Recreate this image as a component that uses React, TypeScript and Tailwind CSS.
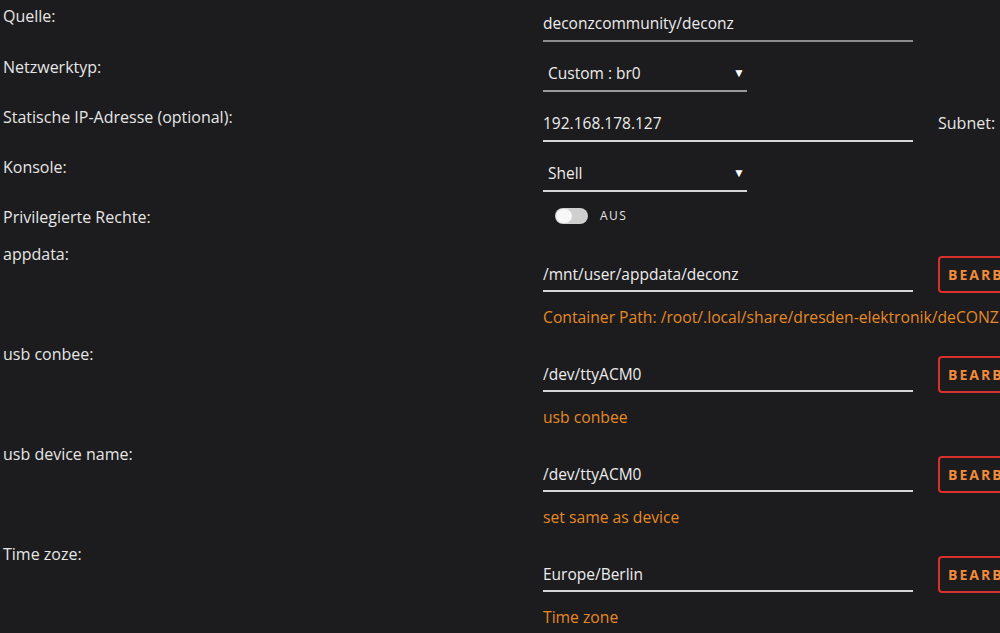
import React from 'react';

const font = { fontFamily: '"Open Sans", "Noto Sans", sans-serif' };

interface PathRowProps {
    label: string;
    value: string;
    hint: string;
}

const Label: React.FC<{ text: string }> = ({ text }) => (
    <div className="w-[540px] shrink-0 pl-[3px] pt-[6px] text-[16px] leading-[22px] text-[#e6e6e6]">{text}</div>
);

const TextInput: React.FC<{ value: string; dim?: boolean }> = ({ value, dim }) => (
    <div
        className={`w-[370px] pb-[5px] text-[15.5px] leading-[24px] text-[#ededed] border-b-2 ${dim ? 'border-[#8d8d8d]' : 'border-[#d6d6d6]'}`}
    >
        {value}
    </div>
);

const SelectBox: React.FC<{ value: string; dim?: boolean }> = ({ value, dim }) => (
    <div
        className={`w-[204px] flex items-center justify-between pl-[5px] pr-[2px] pb-[5px] text-[15.5px] leading-[24px] text-[#ededed] border-b-2 ${dim ? 'border-[#9a9a9a]' : 'border-[#d6d6d6]'}`}
    >
        <span>{value}</span>
        <span className="text-[12px] text-white">▼</span>
    </div>
);

const PathRow: React.FC<PathRowProps> = ({ label, value, hint }) => (
    <div className="flex h-[100px]">
        <Label text={label} />
        <div className="pt-[19px] pl-[3px]">
            <div className="flex items-end gap-[25px]">
                <div className="pb-[1px]">
                    <div className="w-[370px] pb-[4px] text-[15.5px] leading-[24px] text-[#ededed] border-b-2 border-[#d6d6d6]">
                        {value}
                    </div>
                </div>
                <button className="h-[37px] w-[130px] shrink-0 rounded-[4px] border-2 border-[#d9302c] pl-[8px] text-left text-[14px] font-bold tracking-[2px] text-[#f28b3a]">
                    BEARBEITEN
                </button>
            </div>
            <div className="mt-[13px] whitespace-nowrap text-[15.7px] leading-[22px] text-[#e58a25]">{hint}</div>
        </div>
    </div>
);

export default function App() {
    return (
        <div className="h-[633px] w-[1000px] overflow-hidden bg-[#1c1b1d]" style={font}>
            <div className="flex h-[50px]">
                <div className="w-[540px] shrink-0 pl-[3px] pt-[5px] text-[16px] leading-[22px] text-[#e6e6e6]">Quelle:</div>
                <div className="pt-[11px] pl-[3px]">
                    <TextInput value="deconzcommunity/deconz" dim />
                </div>
            </div>
            <div className="flex h-[50px]">
                <Label text="Netzwerktyp:" />
                <div className="pt-[11px] pl-[3px]">
                    <SelectBox value="Custom : br0" dim />
                </div>
            </div>
            <div className="flex h-[50px]">
                <Label text="Statische IP-Adresse (optional):" />
                <div className="flex items-start gap-[25px] pt-[11px] pl-[3px]">
                    <TextInput value="192.168.178.127" />
                    <span className="whitespace-nowrap text-[16px] leading-[24px] text-[#e6e6e6]">Subnet:</span>
                </div>
            </div>
            <div className="flex h-[50px]">
                <Label text="Konsole:" />
                <div className="pt-[11px] pl-[3px]">
                    <SelectBox value="Shell" />
                </div>
            </div>
            <div className="flex h-[37px]">
                <Label text="Privilegierte Rechte:" />
                <div className="flex items-center gap-[12px] self-start pt-[8px] pl-[15px]">
                    <div className="flex h-[16px] w-[33px] items-center rounded-full bg-[#cfcfcf] px-[1px]">
                        <div className="h-[14px] w-[16px] rounded-full bg-[#f7f7f7]" />
                    </div>
                    <span className="text-[12px] leading-[16px] tracking-[1.5px] text-[#e6e6e6]">AUS</span>
                </div>
            </div>
            <PathRow label="appdata:" value="/mnt/user/appdata/deconz" hint="Container Path: /root/.local/share/dresden-elektronik/deCONZ" />
            <PathRow label="usb conbee:" value="/dev/ttyACM0" hint="usb conbee" />
            <PathRow label="usb device name:" value="/dev/ttyACM0" hint="set same as device" />
            <PathRow label="Time zoze:" value="Europe/Berlin" hint="Time zone" />
        </div>
    );
}
